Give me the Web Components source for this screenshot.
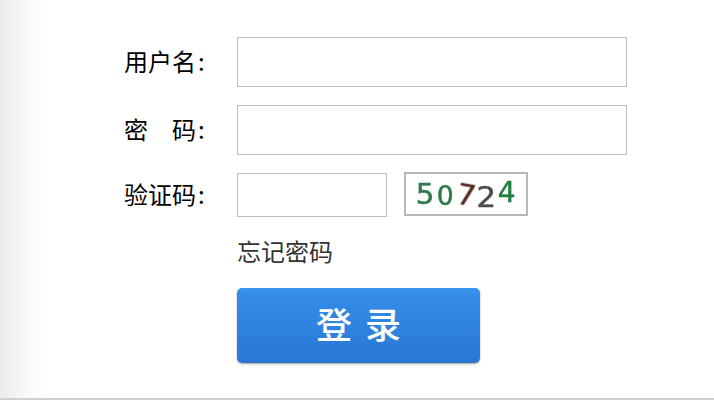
<!DOCTYPE html>
<html lang="zh">
<head>
<meta charset="utf-8">
<title>登录</title>
<style>
  html, body { margin: 0; height: 100%; background: #fff; overflow: hidden; }
</style>
</head>
<body>
<login-page>
  <form-row label="用户名:"><text-box></text-box></form-row>
  <form-row label="密　码:"><text-box></text-box></form-row>
  <form-row label="验证码:" class="code"><text-box short></text-box><captcha-box code="50724"></captcha-box></form-row>
  <form-row class="forgot"><span>忘记密码</span></form-row>
  <form-row class="submit"><login-button>登 录</login-button></form-row>
</login-page>

<script>
const FONT = '"Noto Sans CJK SC", "Liberation Serif", serif';

class LoginPage extends HTMLElement {
  constructor() {
    super();
    this.attachShadow({ mode: 'open' }).innerHTML = `
      <style>
        :host {
          display: block;
          box-sizing: border-box;
          width: 714px;
          height: 400px;
          border-bottom: 2px solid #d0d0d0;
          padding-top: 37px;
          background: linear-gradient(to right, #ececec 0, #f8f8f8 26px, #fff 44px);
          font-family: ${FONT};
        }
        .rows { display: flex; flex-direction: column; gap: 18px; }
      </style>
      <div class="rows"><slot></slot></div>`;
  }
}

class FormRow extends HTMLElement {
  constructor() {
    super();
    this.attachShadow({ mode: 'open' }).innerHTML = `
      <style>
        :host {
          display: grid;
          grid-template-columns: 237px 1fr;
          align-items: center;
          color: #000;
          font-size: 24px;
          line-height: 32px;
        }
        :host(.forgot) { color: #333; }
        :host(.submit) { margin-top: 3px; }
        .label { justify-self: start; margin: 0 0 2px 124px; white-space: nowrap; }
        .colon { margin-left: 2px; }
        .field { display: flex; align-items: center; gap: 17px; }
      </style>
      <div class="label"></div>
      <div class="field"><slot></slot></div>`;
    const label = this.getAttribute('label');
    if (label) {
      const text = label.replace(':', '');
      this.shadowRoot.querySelector('.label').innerHTML = `${text}<span class="colon">:</span>`;
    }
  }
}

class TextBox extends HTMLElement {
  constructor() {
    super();
    this.attachShadow({ mode: 'open' }).innerHTML = `
      <style>
        :host { display: block; width: 390px; height: 50px; }
        :host([short]) { width: 150px; height: 44px; }
        input {
          display: block;
          box-sizing: border-box;
          width: 100%;
          height: 100%;
          margin: 0;
          border: 1px solid #bdbdbd;
          background: #fff;
          outline: none;
        }
      </style>
      <input type="text">`;
  }
}

class CaptchaBox extends HTMLElement {
  constructor() {
    super();
    this.attachShadow({ mode: 'open' }).innerHTML = `
      <style>
        :host {
          display: flex;
          box-sizing: border-box;
          width: 124px;
          height: 44px;
          margin-top: -2px;
          padding: 0 0 0 9px;
          align-items: center;
          border: 2px solid #b8b8b8;
          background: #fff;
          font: 28px/1 "DejaVu Sans", sans-serif;
          -webkit-text-stroke: 0.5px currentColor;
        }
        span { display: block; width: 20.4px; text-align: center; filter: blur(0.4px); }
      </style>`;
    // colour, rotation, vertical wobble and squash of each digit
    const look = [
      ['#2e7a4c', 0, 1, 1.05, 1],
      ['#2c7a4a', 0, 3, 0.95, 0.92],
      ['#5a2a22', 10, 2, 1.05, 1],
      ['#4e4a46', 0, 4, 1.1, 1],
      ['#22803f', 0, -1, 1, 1],
    ];
    [...this.getAttribute('code')].forEach((digit, i) => {
      const span = document.createElement('span');
      const [color, rot, dy, sx, sy] = look[i];
      span.textContent = digit;
      span.style.color = color;
      span.style.transform = `translateY(${dy}px) rotate(${rot}deg) scale(${sx}, ${sy})`;
      this.shadowRoot.appendChild(span);
    });
  }
}

class LoginButton extends HTMLElement {
  constructor() {
    super();
    this.attachShadow({ mode: 'open' }).innerHTML = `
      <style>
        :host { display: block; width: 243px; height: 75px; }
        button {
          display: block;
          width: 100%;
          height: 100%;
          padding: 0 0 5px;
          border: 0;
          border-radius: 5px;
          background: linear-gradient(#3a95f0 0, #348de9 8%, #2a79d6 92%, #2a74cf 100%);
          box-shadow: 0 1px 2px rgba(90, 90, 90, .55);
          color: #fff;
          font: 500 36px/1 ${FONT};
          word-spacing: 5px;
          cursor: pointer;
        }
      </style>
      <button type="button"><slot></slot></button>`;
  }
}

customElements.define('login-page', LoginPage);
customElements.define('form-row', FormRow);
customElements.define('text-box', TextBox);
customElements.define('captcha-box', CaptchaBox);
customElements.define('login-button', LoginButton);
</script>
</body>
</html>
